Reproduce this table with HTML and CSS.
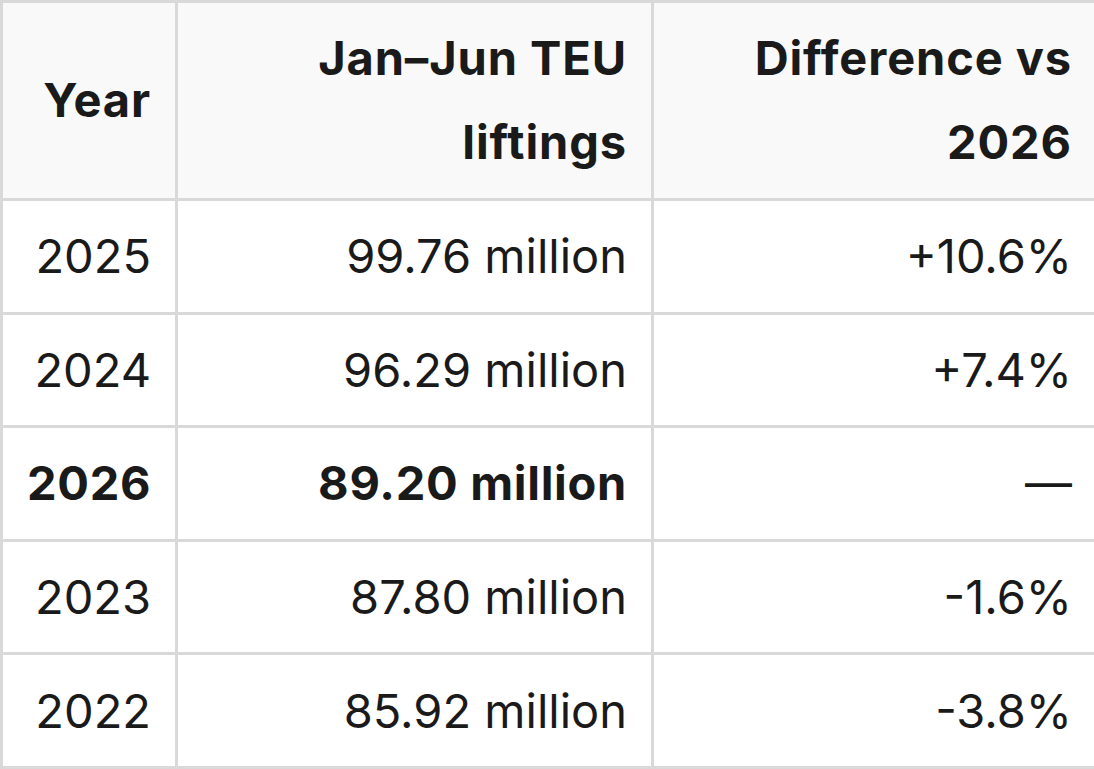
FILE: index.html
```html
<!DOCTYPE html>
<html lang="en">
<head>
<meta charset="utf-8">
<title>TEU liftings</title>
<link rel="stylesheet" href="styles.css">
</head>
<body>
<table class="data">
  <colgroup>
    <col class="c-year">
    <col class="c-teu">
    <col class="c-diff">
  </colgroup>
  <thead>
    <tr>
      <th>Year</th>
      <th>Jan–Jun TEU liftings</th>
      <th>Difference vs 2026</th>
    </tr>
  </thead>
  <tbody>
    <tr><td>2025</td><td>99.76 million</td><td>+10.6%</td></tr>
    <tr><td>2024</td><td>96.29 million</td><td>+7.4%</td></tr>
    <tr class="current"><td>2026</td><td>89.20 million</td><td class="dash">—</td></tr>
    <tr><td>2023</td><td>87.80 million</td><td>-1.6%</td></tr>
    <tr><td>2022</td><td>85.92 million</td><td>-3.8%</td></tr>
  </tbody>
</table>
</body>
</html>
```

FILE: styles.css
```css
html, body {
  margin: 0;
  padding: 0;
  background: #ffffff;
  overflow: hidden;
}

body {
  font-family: Inter, "Noto Sans", "Liberation Sans", sans-serif;
  color: #1a1a1a;
}

.data {
  border-collapse: separate;
  border-spacing: 0;
  table-layout: fixed;
  width: 1094px;
  border-top: 3px solid #d9d9d9;
  border-left: 3px solid #d9d9d9;
  font-size: 47px;
  line-height: 84px;
}

.c-year { width: 175px; }
.c-teu { width: 476px; }
.c-diff { width: 440px; }

.data th,
.data td {
  box-sizing: border-box;
  text-align: right;
  vertical-align: middle;
  padding: 0 24px;
  border-right: 3px solid #d9d9d9;
  border-bottom: 3px solid #d9d9d9;
}

.data th:last-child,
.data td:last-child {
  border-right: none;
  padding-right: 22px;
}

.data th {
  background: #f9f9f9;
  font-weight: 700;
  letter-spacing: 0.9px;
  height: 198px;
  padding-top: 4px;
  padding-bottom: 6px;
}

.data td {
  font-weight: 400;
  height: 113.6px;
}

.data tr.current td {
  font-weight: 700;
  letter-spacing: 0.7px;
}

.data tr.current td.dash {
  font-weight: 400;
  letter-spacing: 0;
}
```
